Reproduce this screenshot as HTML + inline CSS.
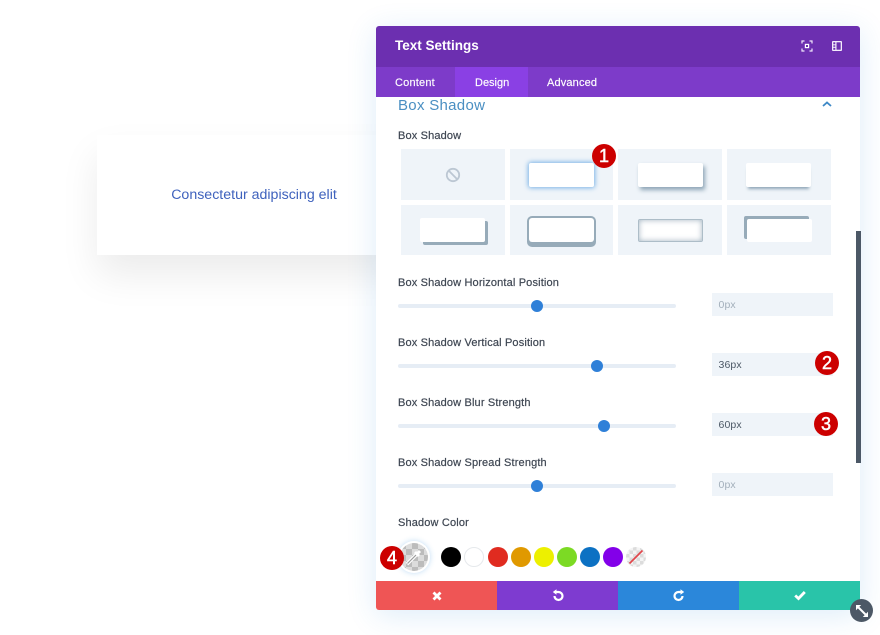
<!DOCTYPE html>
<html><head><meta charset="utf-8">
<style>
html,body{margin:0;padding:0;background:#fff}
body{width:880px;height:635px;position:relative;overflow:hidden;font-family:"Liberation Sans",sans-serif}
div,span{position:absolute;box-sizing:border-box}
.card{left:97px;top:135px;width:314px;height:120px;background:#fff;box-shadow:0 20px 36px rgba(0,0,0,.08)}
.ctext{left:97px;width:314px;top:186px;text-align:center;font-size:14.2px;line-height:18px;color:#3f62bd;white-space:nowrap}
.panel{left:376px;top:25.5px;width:484px;height:584.5px;background:#fff;border-radius:3px;box-shadow:0 5px 30px rgba(43,135,218,.16)}
.hdr{left:376px;top:25.5px;width:484px;height:42px;background:#6c2fb0;border-radius:3px 3px 0 0}
.tabs{left:376px;top:67px;width:484px;height:29.5px;background:#7d3bc9}
.active{left:455px;top:67px;width:73px;height:29.5px;background:#8a40e4}
.t{color:#fff;white-space:nowrap;-webkit-text-stroke:.15px #fff}
.lbl{left:398px;font-size:11px;line-height:14px;color:#3f4753;white-space:nowrap;letter-spacing:.15px;-webkit-text-stroke:.2px #3f4753}
.cell{width:104px;height:51px;background:#eff4f9}
.in{width:65px;height:24px;background:#fff;border-radius:2px}
.track{left:398px;width:278px;height:3.5px;background:#e6edf5;border-radius:2px}
.thumb{width:12px;height:12px;border-radius:50%;background:#2f80d8}
.input{left:712px;width:121px;height:23px;background:#eff4f9;font-size:10.5px;line-height:25px;padding-left:6.5px;color:#4c5866;letter-spacing:.1px}
.badge{width:24px;height:24px;border-radius:50%;background:#cc0000;color:#fff;font-size:18px;font-weight:normal;-webkit-text-stroke:.5px #fff;line-height:24px;text-align:center}
.sw{width:20px;height:20px;border-radius:50%}
.btn{top:581px;height:29px;width:121px}
</style></head>
<body>
<div class="card"></div>
<div class="ctext">Consectetur adipiscing elit</div>

<div class="panel"></div>

<div class="lbl" style="left:398px;top:97px;height:18px;width:200px;overflow:hidden;font-size:15px;line-height:17px;color:#4a8fc2;letter-spacing:.3px;-webkit-text-stroke:0"><span style="position:static;display:block">Box Shadow</span></div>

<div class="hdr"></div>
<div class="tabs"></div>
<div class="active"></div>
<div class="t" style="left:395px;top:37px;font-size:13.5px;line-height:18px;font-weight:bold;-webkit-text-stroke:0">Text Settings</div>
<div class="t" style="left:395px;top:76px;font-size:11px;line-height:14px;letter-spacing:.2px">Content</div>
<div class="t" style="left:475px;top:76px;font-size:11px;line-height:14px;letter-spacing:0">Design</div>
<div class="t" style="left:547px;top:76px;font-size:11px;line-height:14px;letter-spacing:.15px">Advanced</div>

<svg style="position:absolute;left:801px;top:40px" width="12" height="12" viewBox="0 0 12 12" fill="none" stroke="#efe6fb" stroke-width="1.2"><path d="M1 3.5V1H3.5M8.500 1H11V3.5M11 8.500V11H8.500M3.500 11H1V8.500"/><rect x="3.800" y="3.800" width="4.400" height="4.400" fill="#fff" stroke="none"/><rect x="5" y="5" width="2" height="2" fill="#6c2fb0" stroke="none"/></svg>
<svg style="position:absolute;left:832px;top:41px" width="10" height="10" viewBox="0 0 10 10"><rect width="10" height="10" rx="1" fill="#f3ecfb"/><rect x="1.300" y="1.300" width="2" height="2" fill="#6c2fb0"/><rect x="1.300" y="4.300" width="2" height="1.500" fill="#6c2fb0"/><rect x="1.300" y="6.800" width="2" height="2" fill="#6c2fb0"/><rect x="4.500" y="1.300" width="4.200" height="7.400" fill="#6c2fb0"/></svg>
<svg style="position:absolute;left:821px;top:100px" width="12" height="8" viewBox="0 0 12 8" fill="none" stroke="#3d88c6" stroke-width="1.800"><path d="M2 6L6 2.500L10 6"/></svg>

<div class="lbl" style="top:129px">Box Shadow</div>

<div class="cell" style="left:401px;top:149px"></div>
<div class="cell" style="left:510px;top:149px;width:103px"></div>
<div class="cell" style="left:618px;top:149px"></div>
<div class="cell" style="left:727px;top:149px"></div>
<div class="cell" style="left:401px;top:205px;height:50px"></div>
<div class="cell" style="left:510px;top:205px;height:50px;width:103px"></div>
<div class="cell" style="left:618px;top:205px;height:50px"></div>
<div class="cell" style="left:727px;top:205px;height:50px"></div>

<svg style="position:absolute;left:445px;top:167px" width="16" height="16" viewBox="0 0 16 16" fill="none" stroke="#bcc7d3" stroke-width="1.800"><circle cx="8" cy="8" r="6.200"/><path d="M3.800 3.800L12.200 12.200"/></svg>

<div class="in" style="left:529px;top:163px;box-shadow:0 0 5px 1px rgba(43,135,218,.6)"></div>
<div class="in" style="left:638px;top:163px;box-shadow:2px 3px 4px rgba(125,150,170,.85)"></div>
<div class="in" style="left:746px;top:163px;box-shadow:0 4px 3px -2px rgba(125,150,170,.85)"></div>
<div class="in" style="left:420px;top:218px;box-shadow:3px 3px 0 #97abb9"></div>
<div class="in" style="left:529px;top:218px;border-radius:3px;box-shadow:0 0 0 2px #97abb9,0 3px 0 2px #97abb9"></div>
<div class="in" style="left:638px;top:219px;height:23px;border:1.500px solid #adbdc8;box-shadow:inset 0 0 6px rgba(125,150,170,.7)"></div>
<div class="in" style="left:747px;top:219px;height:23px;box-shadow:-3px -3px 0 #97abb9"></div>

<div class="lbl" style="top:276px">Box Shadow Horizontal Position</div>
<div class="track" style="top:304px"></div>
<div class="thumb" style="left:531px;top:300px"></div>
<div class="input" style="top:293px;color:#a3afbb">0px</div>

<div class="lbl" style="top:336px">Box Shadow Vertical Position</div>
<div class="track" style="top:364px"></div>
<div class="thumb" style="left:591px;top:360px"></div>
<div class="input" style="top:353px">36px</div>

<div class="lbl" style="top:396px">Box Shadow Blur Strength</div>
<div class="track" style="top:424px"></div>
<div class="thumb" style="left:598px;top:420px"></div>
<div class="input" style="top:413px">60px</div>

<div class="lbl" style="top:456px">Box Shadow Spread Strength</div>
<div class="track" style="top:484px"></div>
<div class="thumb" style="left:531px;top:480px"></div>
<div class="input" style="top:473px;color:#a3afbb">0px</div>

<div class="lbl" style="top:516px">Shadow Color</div>

<div style="left:855.500px;top:231px;width:5px;height:232px;background:#4c5866"></div>

<div style="left:398px;top:541px;width:32px;height:32px;border-radius:50%;background:#fff;box-shadow:0 0 6px rgba(43,135,218,.3)"></div>
<svg style="position:absolute;left:400px;top:543px" width="28" height="28" viewBox="0 0 28 28">
<defs><pattern id="ck" width="12" height="12" patternUnits="userSpaceOnUse"><rect width="12" height="12" fill="#dcdcdc"/><rect width="6" height="6" fill="#bcbcbc"/><rect x="6" y="6" width="6" height="6" fill="#bcbcbc"/></pattern></defs>
<circle cx="14" cy="14" r="14" fill="url(#ck)"/>
<path d="M7 21L17 11" stroke="#fff" stroke-width="3.500"/><path d="M7.500 20.500L16.500 11.500" stroke="#9a9a9a" stroke-width="1.200"/><path d="M15 9L19 13M17 11L20 8" stroke="#fff" stroke-width="3"/>
</svg>

<div class="sw" style="left:441.300px;top:547px;background:#000"></div>
<div class="sw" style="left:464.300px;top:547px;background:#fff;border:1px solid #e6e9ec"></div>
<div class="sw" style="left:487.700px;top:547px;background:#e02b20"></div>
<div class="sw" style="left:510.700px;top:547px;background:#e09900"></div>
<div class="sw" style="left:533.700px;top:547px;background:#edf000"></div>
<div class="sw" style="left:556.700px;top:547px;background:#7cda24"></div>
<div class="sw" style="left:580px;top:547px;background:#0c71c3"></div>
<div class="sw" style="left:603px;top:547px;background:#8300e9"></div>
<svg style="position:absolute;left:626px;top:547px" width="20" height="20" viewBox="0 0 20 20">
<defs><pattern id="ck2" width="7" height="7" patternUnits="userSpaceOnUse"><rect width="7" height="7" fill="#f4f4f4"/><rect width="3.500" height="3.500" fill="#dcdcdc"/><rect x="3.500" y="3.500" width="3.500" height="3.500" fill="#dcdcdc"/></pattern></defs>
<circle cx="10" cy="10" r="10" fill="url(#ck2)"/><path d="M3.500 16.500L16.500 3.500" stroke="#e0474c" stroke-width="1.800"/></svg>

<div class="btn" style="left:376px;background:#ef5555;border-radius:0 0 0 3px"></div>
<div class="btn" style="left:497px;background:#7e3bd0"></div>
<div class="btn" style="left:618px;background:#2b87da"></div>
<div class="btn" style="left:739px;background:#29c4a9;border-radius:0 0 3px 0"></div>

<svg style="position:absolute;left:431px;top:590px" width="12" height="12" viewBox="0 0 12 12" stroke="#fff" stroke-width="2.800" fill="none"><path d="M2.500 2.500L9.500 9.500M9.500 2.500L2.500 9.500"/></svg>
<svg style="position:absolute;left:551px;top:589px" width="14" height="14" viewBox="0 0 14 14" fill="none" stroke="#fff" stroke-width="2.200"><path d="M4.500 3H7.500A4 4 0 1 1 3.500 7"/><path d="M1.800 3L5.500 .3V5.700Z" fill="#fff" stroke="none"/></svg>
<svg style="position:absolute;left:672px;top:589px" width="14" height="14" viewBox="0 0 14 14" fill="none" stroke="#fff" stroke-width="2.200"><path d="M9.500 3H6.500A4 4 0 1 0 10.500 7"/><path d="M12.200 3L8.500 .3V5.700Z" fill="#fff" stroke="none"/></svg>
<svg style="position:absolute;left:794px;top:590px" width="12" height="11" viewBox="0 0 12 11" fill="none" stroke="#fff" stroke-width="2.800"><path d="M1.200 5.500L4.500 8.500L10.800 2"/></svg>

<div style="left:850px;top:599px;width:23px;height:23px;border-radius:50%;background:#4c5866"></div>
<svg style="position:absolute;left:854.500px;top:603.500px" width="14" height="14" viewBox="0 0 14 14" fill="none" stroke="#fff" stroke-width="2"><path d="M3.500 3.500L10.500 10.500"/><path d="M1 1H6.200L1 6.200Z M13 13H7.800L13 7.800Z" fill="#fff" stroke="none"/></svg>

<div class="badge" style="left:592px;top:144px">1</div>
<div class="badge" style="left:815px;top:351px">2</div>
<div class="badge" style="left:814px;top:412px">3</div>
<div class="badge" style="left:380px;top:546px">4</div>
</body></html>
